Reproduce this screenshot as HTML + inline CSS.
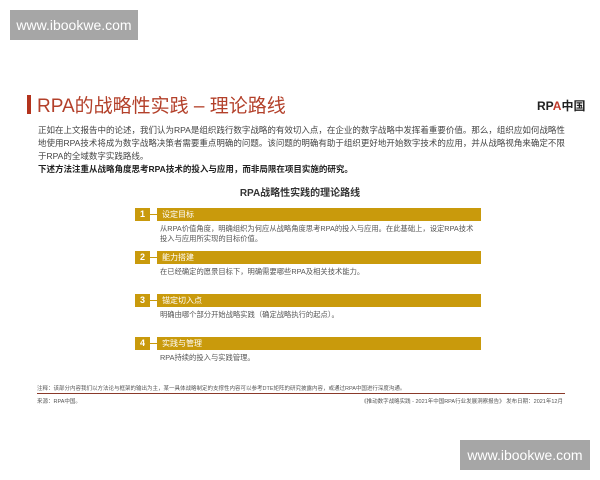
<!DOCTYPE html>
<html><head><meta charset="utf-8"><style>
body{margin:0;width:600px;height:480px;background:#fff;position:relative;overflow:hidden;font-family:"Liberation Sans","Noto Sans CJK SC",sans-serif;color:#444}
.a{position:absolute;white-space:nowrap}
.wm{position:absolute;background:#a6a6a6;color:#fff;font-size:14px;line-height:30px;text-align:center}
.num{position:absolute;left:135px;width:15px;height:13px;background:#c99a0c;color:#fff;font-size:9px;font-weight:bold;text-align:center;line-height:13px}
.ln{position:absolute;left:150px;width:8px;height:1px;background:#c99a0c}
.bar{position:absolute;left:157px;width:324px;height:13px;background:#c99a0c;color:#fff;font-size:8px;line-height:13px;padding-left:5px;box-sizing:border-box}
.d{position:absolute;left:160px;font-size:7.3px;color:#555;line-height:10px;width:320px}
</style></head><body>
<div class="wm" style="left:10px;top:10px;width:128px">www.ibookwe.com</div>
<div class="wm" style="left:460px;top:440px;width:130px">www.ibookwe.com</div>
<div class="a" style="left:27px;top:95px;width:4px;height:19px;background:#b3331d"></div>
<div class="a" style="left:37px;top:91px;font-size:19px;color:#b3402a;font-weight:normal">RPA的战略性实践 – 理论路线</div>
<div class="a" style="left:537px;top:97px;font-size:12px;font-weight:bold;color:#222">RP<span style="color:#c0392b">A</span>中国</div>
<div class="a" style="left:38px;top:124px;font-size:8.5px;line-height:13px;color:#444;white-space:normal;width:532px">正如在上文报告中的论述，我们认为RPA是组织践行数字战略的有效切入点，在企业的数字战略中发挥着重要价值。那么，组织应如何战略性地使用RPA技术将成为数字战略决策者需要重点明确的问题。该问题的明确有助于组织更好地开始数字技术的应用，并从战略视角来确定不限于RPA的全域数字实践路线。<br><b style="color:#222">下述方法注重从战略角度思考RPA技术的投入与应用，而非局限在项目实施的研究。</b></div>
<div class="a" style="left:0;width:600px;text-align:center;top:184px;font-size:10px;font-weight:bold;color:#333">RPA战略性实践的理论路线</div>

<div class="num" style="top:208px">1</div><div class="ln" style="top:214px"></div><div class="bar" style="top:208px">设定目标</div>
<div class="d" style="top:224px">从RPA价值角度，明确组织为何应从战略角度思考RPA的投入与应用。在此基础上，设定RPA技术投入与应用所实现的目标价值。</div>
<div class="num" style="top:251px">2</div><div class="ln" style="top:257px"></div><div class="bar" style="top:251px">能力搭建</div>
<div class="d" style="top:267px">在已经确定的愿景目标下，明确需要哪些RPA及相关技术能力。</div>
<div class="num" style="top:294px">3</div><div class="ln" style="top:300px"></div><div class="bar" style="top:294px">锚定切入点</div>
<div class="d" style="top:310px">明确由哪个部分开始战略实践（确定战略执行的起点）。</div>
<div class="num" style="top:337px">4</div><div class="ln" style="top:343px"></div><div class="bar" style="top:337px">实践与管理</div>
<div class="d" style="top:353px">RPA持续的投入与实践管理。</div>

<div class="a" style="left:37px;top:384px;font-size:5.5px;color:#555">注释：该部分内容我们以方法论与框架的输出为主，某一具体战略制定的支撑性内容可以参考DTE矩阵的研究披露内容，或通过RPA中国进行深度沟通。</div>
<div class="a" style="left:37px;top:393px;width:528px;height:1px;background:#8a3a2a"></div>
<div class="a" style="left:37px;top:397px;font-size:5.5px;color:#555">来源：RPA中国。</div>
<div class="a" style="right:37px;top:397px;font-size:5.5px;color:#555">《推动数字战略实践 - 2021年中国RPA行业发展洞察报告》 发布日期：2021年12月</div>
</body></html>
